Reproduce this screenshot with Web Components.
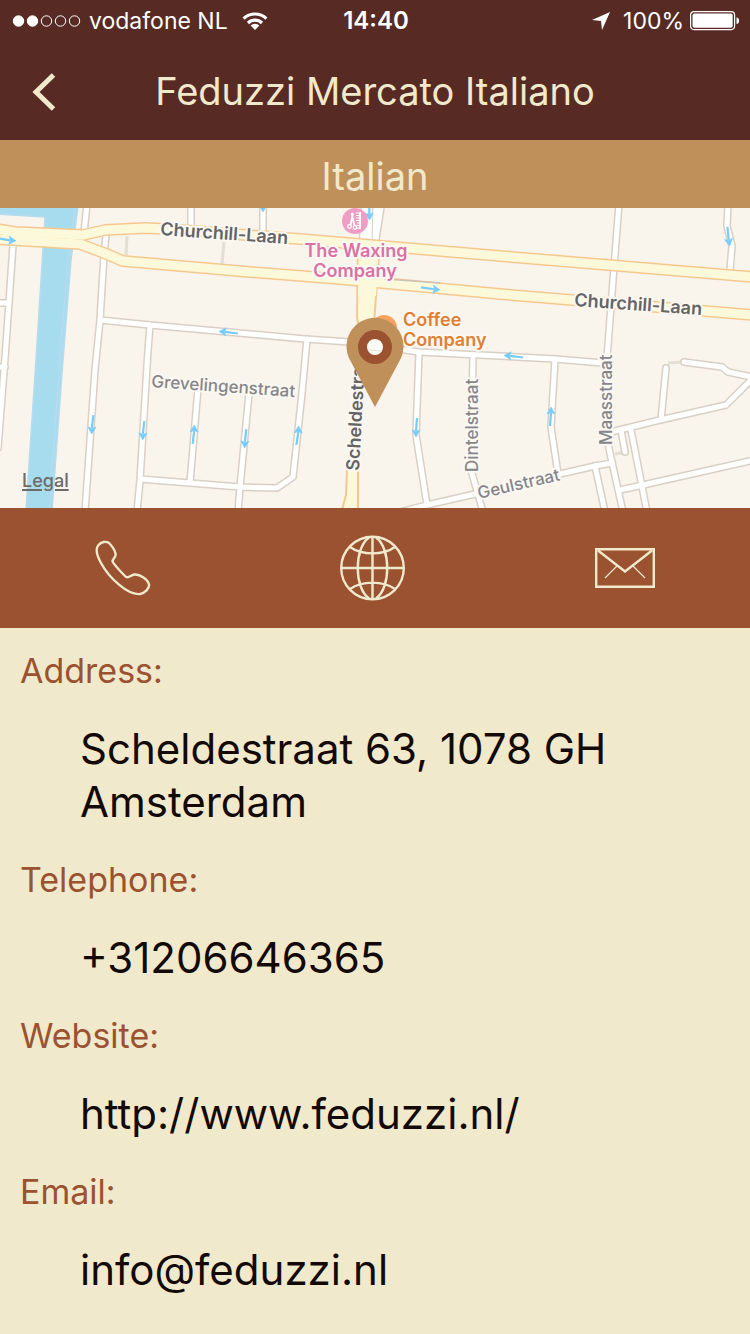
<!DOCTYPE html>
<html lang="en">
<head>
<meta charset="utf-8">
<meta name="viewport" content="width=device-width, initial-scale=1">
<title>Feduzzi Mercato Italiano</title>
<style>
  :root {
    --dark: #572b24;
    --tan: #c0905b;
    --rust: #9a5230;
    --cream: #f1e9cc;
    --ink: #130a08;
  }
  html, body { margin: 0; min-height: 100%; background: var(--cream); }
  body { font-family: Inter, "Liberation Sans", sans-serif; color: var(--ink); }
</style>
</head>
<body>
<venue-page></venue-page>

<template id="status-bar">
  <style>
    :host { display: grid; grid-template-columns: 1fr auto 1fr; align-items: center; box-sizing: border-box; height: 42px; padding: 0 10px 0 12px; background: var(--dark); color: #fff; font-size: 23px; line-height: 28px; }
    div { display: flex; align-items: center; }
    .time { font-size: 24px; font-weight: 600; }
    .end { justify-content: flex-end; }
    svg { display: block; flex: none; }
    .dots { margin-right: 8px; }
    .wifi { margin-left: 14px; }
    .arrow { margin-right: 12px; }
    .battery { margin-left: 6px; }
  </style>
  <div>
    <svg class="dots" width="69" height="14" viewBox="0 0 69 14" fill="none" stroke="#fff">
      <circle cx="6.500" cy="7" r="5.200" fill="#fff"/><circle cx="20.500" cy="7" r="5.200" fill="#fff"/>
      <circle cx="34.500" cy="7" r="5.200"/><circle cx="48.500" cy="7" r="5.200"/><circle cx="62.500" cy="7" r="5.200"/>
    </svg>
    <slot name="carrier"></slot>
    <svg class="wifi" width="26" height="20" viewBox="0 0 26 20" fill="none" stroke="#fff" stroke-width="3.200">
      <path d="M1.600 7.600a16.400 16.400 0 0 1 22.800 0M6 12a10.200 10.200 0 0 1 14 0"/>
      <path d="M13 19l-4.400-4.500a6.400 6.400 0 0 1 8.800 0z" fill="#fff" stroke="none"/>
    </svg>
  </div>
  <div class="time"><slot name="time"></slot></div>
  <div class="end">
    <svg class="arrow" width="20" height="20" viewBox="0 0 20 20"><path d="M19 1L11 19L10 10L1 9z" fill="#fff"/></svg>
    <slot name="charge"></slot>
    <svg class="battery" width="50" height="20" viewBox="0 0 50 20" fill="none" stroke="#fff">
      <rect x=".6" y=".6" width="44" height="18" rx="3.500" stroke-width="1.200"/>
      <rect x="2.500" y="2.500" width="40.200" height="14.200" rx="2" fill="#fff" stroke="none"/>
      <path d="M46.500 6.500c3.500 0 3.500 6.500 0 6.500z" fill="#fff" stroke="none"/>
    </svg>
  </div>
</template>

<template id="title-bar">
  <style>
    :host { display: grid; grid-template-columns: 88px 1fr 88px; align-items: center; height: 98px; background: var(--dark); color: var(--cream); }
    button { display: flex; align-items: center; height: 88px; padding: 0 0 0 32px; border: 0; background: none; color: inherit; cursor: pointer; }
    h1 { margin: 0; font-size: 38px; line-height: 48px; font-weight: 400; text-align: center; white-space: nowrap; }
  </style>
  <button type="button" aria-label="Back">
    <svg width="26" height="40" viewBox="0 0 26 40" fill="none" stroke="currentColor" stroke-width="5"><path d="M21.500 4L4 21L21.500 38"/></svg>
  </button>
  <h1><slot></slot></h1>
</template>

<template id="cuisine-band">
  <style>
    :host { display: block; padding: 12px 0 8px; background: var(--tan); color: var(--cream); text-align: center; font-size: 38px; line-height: 48px; }
  </style>
  <slot></slot>
</template>

<template id="street-map">
  <style>
    :host { display: block; position: relative; height: 300px; overflow: hidden; background: #f9f4ec; }
    svg { display: block; width: 100%; height: 100%; }
    a { position: absolute; left: 22px; bottom: 16px; color: #6b6b69; font-size: 18px; line-height: 22px; font-weight: 500; text-decoration-thickness: 2px; text-underline-offset: 2px; }
    .case { stroke: #d9d0c5; stroke-width: 8; }
    .lane { stroke: #fff; stroke-width: 5; }
    .mcase { stroke: #f6c88f; stroke-width: 12; }
    .main { stroke: #fcf9da; stroke-width: 9; }
    text { font-size: 17px; paint-order: stroke; stroke: #fbf8f2; stroke-width: 4px; stroke-linejoin: round; font-weight: 500; fill: #86868a; }
    .big { font-size: 18px; font-weight: 600; fill: #636465; }
    .pink { fill: #da71a5; text-anchor: middle; font-weight: 600; font-size: 18px; }
    .orange { fill: #df8033; font-weight: 600; font-size: 18px; }
  </style>
  <svg viewBox="0 0 750 300" preserveAspectRatio="xMidYMid slice" role="img" aria-label="Map of Scheldestraat">
    <defs>
      <g id="streets">
        <path d="M87 -4L83 35M106 27L104 47L100 112L95 162L85 304M13 37L9 95L5 150L-2 240M-4 95H9M-4 159H5M191 -4V20M263 -4V26"/>
        <path d="M100 112L150 117L250 126L305 131L350 134L419 144L500 148L555 151L603 155"/>
        <path d="M150 117L148 142L140 272L137 304M140 271L190 275L240 279L277 280L293 269L302 185L307 131M198 180L190 275M249 185L240 279L238 304"/>
        <path d="M419 144L416 227L427 297M396 305L427 297L475 286L560 266L595 258L612 255M473 147L471 262L483 304M555 151L551 219L558 266"/>
        <path d="M619 -4L613 72L607 150L606 225L610 245L623 304M611 224L660 212L726 197L752 171M666 160L661 212M684 154L722 159L728 164L752 169M621 222L625 244M631 222L647 304M620 282L643 277L754 252M595 258L605 304"/>
        <path d="M728 -4L727 18L732 38L730 62"/>
      </g>
      <g id="mains">
        <path d="M-4 21L15 24L83 27L105 22L145 20L166 21L300 31L500 48L754 69"/>
        <path d="M-4 31L80 36L104 45L123 53L250 64L340 71L500 86L754 107"/>
      </g>
      <g id="arrow"><path d="M-9 -1L4 0" stroke="#75cbfb" stroke-width="2.200"/><path d="M10 0L3 -4L4.500 0L3 4z" fill="#75cbfb" stroke="#75cbfb" stroke-width=".6"/></g>
    </defs>
    <g fill="#a7dcee" stroke="#b5dbef" stroke-width="1.500">
      <path d="M-2 -2H78L71 52L63 152L52 302H26L36 152L45 9L-2 6z"/>
      <path d="M75 -2L67 62L60 152L49 302" fill="none"/>
    </g>
    <path d="M127 28L126 47M224 34L222 56M668 155L683 154M615 246L625 244" stroke="#e3dfd3" stroke-width="3"/>
    <g fill="none" stroke-linecap="round" stroke-linejoin="round">
      <use href="#streets" class="case"/>
      <use href="#streets" class="lane"/>
      <path d="M367 -4L365 34M379 -4L373 34" stroke="#d9d0c5" stroke-width="13"/>
      <path d="M367 -4L365 34M379 -4L373 34" stroke="#fff" stroke-width="10"/>
      <path d="M373 -4L372 34" stroke="#d9d0c5" stroke-width="1"/>
      <use href="#mains" class="mcase"/>
      <path d="M358 34L357 110L362 130L355 220L347 262L346 287L342 302H358L358 260L366 125L374 115L380 34z" fill="#fcf9da" stroke="#f6c88f" stroke-width="2"/>
      <use href="#mains" class="main"/>
      <path d="M359 38L358 88H376L379 38z" fill="#fcf9da"/>
      <path d="M385 71L440 75" stroke="#c9c2b8" stroke-width="1.500"/>
    </g>
    <use href="#arrow" transform="translate(6 32) rotate(5)"/>
    <use href="#arrow" transform="translate(229 124) rotate(183)"/>
    <use href="#arrow" transform="translate(369 2) rotate(87)"/>
    <use href="#arrow" transform="translate(263 -6) rotate(90)"/>
    <use href="#arrow" transform="translate(430 81) rotate(4)"/>
    <use href="#arrow" transform="translate(728 28) rotate(80)"/>
    <use href="#arrow" transform="translate(92 216) rotate(92)"/>
    <use href="#arrow" transform="translate(143 222) rotate(92)"/>
    <use href="#arrow" transform="translate(194 227) rotate(-88)"/>
    <use href="#arrow" transform="translate(245 230) rotate(92)"/>
    <use href="#arrow" transform="translate(298 228) rotate(-86)"/>
    <use href="#arrow" transform="translate(416 219) rotate(90)"/>
    <use href="#arrow" transform="translate(551 209) rotate(-90)"/>
    <use href="#arrow" transform="translate(514 148) rotate(183)"/>
    <text class="big" transform="translate(160 27) rotate(4)">Churchill-Laan</text>
    <text class="big" transform="translate(574 98) rotate(4)">Churchill-Laan</text>
    <text transform="translate(151 179) rotate(4)">Grevelingenstraat</text>
    <text class="big" transform="translate(359 263) rotate(-87)">Scheldestraat</text>
    <text transform="translate(478 264) rotate(-90)">Dintelstraat</text>
    <text transform="translate(612 237) rotate(-90)">Maasstraat</text>
    <text transform="translate(479 291) rotate(-13)">Geulstraat</text>
    <text class="pink" x="356" y="49">The Waxing</text>
    <text class="pink" x="355" y="69">Company</text>
    <text class="orange" x="403" y="118">Coffee</text>
    <text class="orange" x="403" y="138">Company</text>
    <circle cx="355" cy="13" r="13" fill="#f09dc4"/>
    <g fill="none" stroke="#fff">
      <circle cx="349.500" cy="18.500" r="1.800" stroke-width="1.300"/><circle cx="355" cy="19.500" r="1.800" stroke-width="1.300"/>
      <path d="M350.500 17L353 5M354.500 17.500L351.500 5" stroke-width="1.800"/>
      <path d="M360 4V21" stroke-width="2"/><path d="M356 5H360M356 7.500H360M356 10H360M356 12.500H360M357 15H360M357 17.500H360M357 20H360" stroke-width="1.200"/>
    </g>
    <circle cx="384" cy="120" r="13" fill="#f7a35f"/>
    <path d="M375 199L350 152A28.500 28.500 0 1 1 400 152z" fill="#c0905b"/>
    <circle cx="375" cy="139" r="12.500" fill="#fdfbf6" stroke="#9a5230" stroke-width="9"/>
    <path d="M368 142L382 143" stroke="#e6dfd6" stroke-width="1"/>
  </svg>
  <a href="#legal">Legal</a>
</template>

<template id="contact-actions">
  <style>
    :host { display: block; background: var(--rust); color: var(--cream); }
    nav { display: grid; grid-template-columns: repeat(3, 1fr); height: 120px; }
    a { display: grid; place-items: center; color: inherit; }
    svg { display: block; }
  </style>
  <nav>
    <a href="tel:+31206646365" aria-label="Call"><svg width="60" height="60" viewBox="0 0 60 60" fill="none" stroke="currentColor" stroke-width="2.400" stroke-linejoin="round"><path d="M3.500 7C6 4 11 2.800 14 5C18 9 20 12.500 20.600 16C21 19.500 17.500 20.500 17.500 23.500C20 28 26 34 31 39C34 40.500 36 36.800 39.500 36.500C45 36 53 41.500 54 46.500C54.500 50.500 50 55 45 56C33 57.500 14 40 6 25C1.500 17 0 11 3.500 7z"/></svg></a>
    <a href="http://www.feduzzi.nl/" aria-label="Open website"><svg width="70" height="66" viewBox="0 0 70 66" fill="none" stroke="currentColor" stroke-width="2.400"><circle cx="32.500" cy="33" r="31.300"/><path d="M32.500 2V64M1 33H64M29 2.500C14 13 14 53 29 63.500M36 2.500C51 13 51 53 36 63.500M10 12C22 20.500 43 20.500 55 12M10 54C22 45.500 43 45.500 55 54"/></svg></a>
    <a href="mailto:info@feduzzi.nl" aria-label="Send email"><svg width="60" height="40" viewBox="0 0 60 40" fill="none" stroke="currentColor"><path d="M1.200 1.200H58.800V38.800H1.200z" stroke-width="2.400"/><path d="M3 2.500L30 23.500L57 2.500" stroke-width="2.400"/><path d="M22 18L10 30M38 18L50 30" stroke-width="1.200"/></svg></a>
  </nav>
</template>

<template id="contact-list">
  <style>
    :host { display: block; padding-top: 21px; }
    dl { margin: 0; }
  </style>
  <dl><slot></slot></dl>
</template>

<template id="contact-field">
  <style>
    :host { display: block; padding: 0 20px; }
    dt { color: var(--rust); font-size: 34px; line-height: 43px; }
    dd { margin: 30px 60px; font-size: 42px; line-height: 53px; overflow-wrap: anywhere; }
    ::slotted(a) { color: inherit; text-decoration: none; }
  </style>
  <dt></dt>
  <dd><slot></slot></dd>
</template>

<template id="venue-page">
  <style>
    :host { display: block; }
    header, main { display: block; }
  </style>
  <header>
    <status-bar><span slot="carrier">vodafone NL</span><span slot="time">14:40</span><span slot="charge">100%</span></status-bar>
    <title-bar>Feduzzi Mercato Italiano</title-bar>
  </header>
  <main>
    <cuisine-band>Italian</cuisine-band>
    <street-map></street-map>
    <contact-actions></contact-actions>
    <contact-list>
      <contact-field label="Address:">Scheldestraat 63, 1078 GH Amsterdam</contact-field>
      <contact-field label="Telephone:"><a href="tel:+31206646365">+31206646365</a></contact-field>
      <contact-field label="Website:"><a href="http://www.feduzzi.nl/">http://www.feduzzi.nl/</a></contact-field>
      <contact-field label="Email:"><a href="mailto:info@feduzzi.nl">info@feduzzi.nl</a></contact-field>
    </contact-list>
  </main>
</template>

<script>
  class TemplateElement extends HTMLElement {
    constructor() {
      super();
      const template = document.getElementById(this.localName);
      this.attachShadow({ mode: "open" }).append(document.importNode(template.content, true));
    }
  }
  class ContactField extends TemplateElement {
    connectedCallback() {
      this.shadowRoot.querySelector("dt").textContent = this.getAttribute("label");
    }
  }
  for (const name of ["status-bar", "title-bar", "cuisine-band", "street-map", "contact-actions", "contact-list"]) {
    customElements.define(name, class extends TemplateElement {});
  }
  customElements.define("contact-field", ContactField);
  customElements.define("venue-page", class extends TemplateElement {});
</script>
</body>
</html>
